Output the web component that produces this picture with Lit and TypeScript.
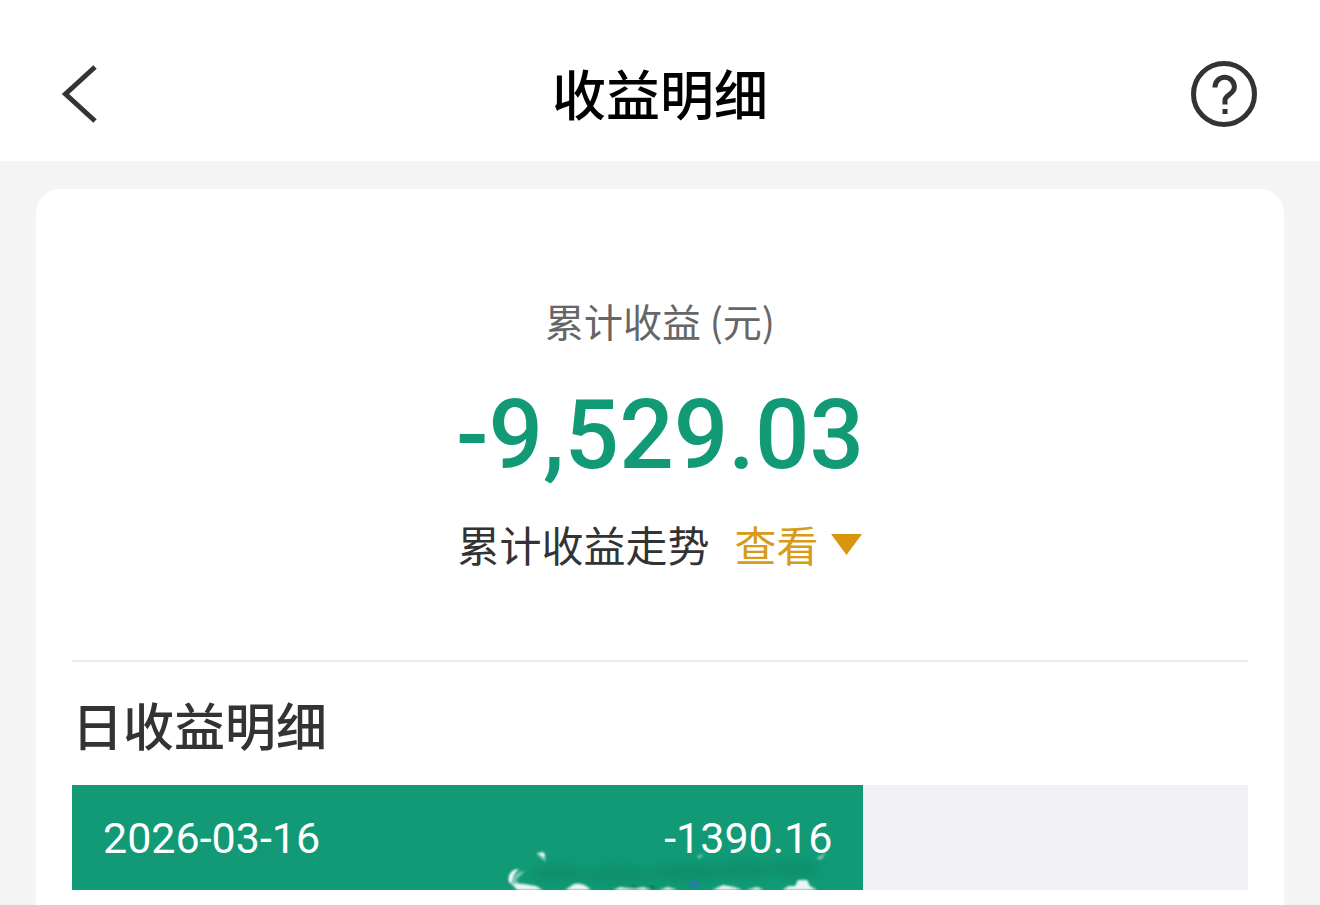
import { LitElement, html, css } from "lit";
import { customElement, property } from "lit/decorators.js";

interface DailyIncome {
  date: string;
  amount: string;
  share: number;
}

@customElement("income-row")
class IncomeRow extends LitElement {
  @property({ attribute: false }) item!: DailyIncome;

  static styles = css`
    :host {
      display: block;
    }
    .track {
      background: #f0f0f5;
    }
    .bar {
      position: relative;
      display: flex;
      justify-content: space-between;
      align-items: center;
      box-sizing: border-box;
      padding: 27px 31px 26px;
      background: #119a75;
      color: #fff;
      font-family: Roboto, sans-serif;
      font-size: 43px;
      line-height: 52px;
      white-space: nowrap;
    }
    .smudge {
      position: absolute;
      right: 28px;
      bottom: -4px;
      width: 328px;
      height: 44px;
    }
  `;

  render() {
    return html`
      <div class="track">
        <div class="bar" style="width:${this.item.share}%">
          <span>${this.item.date}</span>
          <span>${this.item.amount}</span>
          <svg class="smudge" viewBox="0 0 328 44" aria-hidden="true">
            <defs>
              <filter id="soft" x="-10%" y="-50%" width="120%" height="200%">
                <feGaussianBlur stdDeviation="4" />
              </filter>
              <filter id="edge" x="-10%" y="-50%" width="120%" height="200%">
                <feGaussianBlur stdDeviation="1" />
              </filter>
            </defs>
            <g filter="url(#soft)" fill="#0b8766" opacity=".55">
              <ellipse cx="52" cy="24" rx="28" ry="8" />
              <ellipse cx="112" cy="25" rx="34" ry="9" />
              <ellipse cx="180" cy="23" rx="38" ry="10" />
              <ellipse cx="238" cy="20" rx="28" ry="9" />
              <ellipse cx="286" cy="19" rx="25" ry="8" />
            </g>
            <g filter="url(#edge)">
              <path fill="#fff" d="M12 19C5 19 0 25 2 32L5 34Q4 26 12 19ZM29 4Q37 0 38 5L37 8Q34 4 29 4Z" />
              <path fill="#fff" opacity=".45" d="M5 32Q6 22 18 21L9 30L13 34ZM30 5L38 6L39 12L35 9Z" />
              <path fill="#fff" opacity=".9" d="M4 33L17 34L29 36L36 40H10ZM58 40L67 34Q76 32 84 40ZM106 40L113 37L120 38L128 39L136 37L144 40ZM152 40L161 37L171 40ZM205 40L216 35L227 37L236 40ZM239 40L250 37L257 40ZM275 40L282 36L288 36L291 30H300L303 36L310 40Z" />
              <path fill="#fff" opacity=".45" d="M190 6L197 4L192 9ZM309 8L319 3L314 10Z" />
              <path fill="#237fa8" d="M181 37L185 31L190 31L193 37Z" />
              <path fill="#086b50" d="M124 36h7v2h-7zM142 36h6v2h-6z" />
            </g>
          </svg>
        </div>
      </div>
    `;
  }
}

@customElement("app-root")
class AppRoot extends LitElement {
  private days: DailyIncome[] = [
    { date: "2026-03-16", amount: "-1390.16", share: 67.3 },
  ];

  static styles = css`
    :host {
      display: flex;
      flex-direction: column;
      min-height: 100vh;
      background: #f4f4f4;
      color: #333;
      font-family: "Noto Sans CJK SC", sans-serif;
    }
    button {
      padding: 0;
      border: 0;
      background: none;
      color: inherit;
      font: inherit;
      cursor: pointer;
    }
    svg {
      display: block;
    }
    .header {
      display: grid;
      grid-template-columns: 72px 1fr 72px;
      align-items: start;
      padding: 54px 60px 27px;
      background: #fff;
    }
    .header button {
      height: 80px;
    }
    .help {
      justify-self: end;
    }
    h1,
    h2,
    p {
      margin: 0;
      font-weight: 500;
    }
    h1 {
      color: #000;
      font-size: 54px;
      line-height: 78px;
      text-align: center;
    }
    .card {
      flex: 1;
      margin: 28px 36px 0;
      padding: 0 36px 15px;
      border-radius: 24px 24px 0 0;
      background: #fff;
    }
    .summary {
      display: flex;
      flex-direction: column;
      align-items: center;
      padding: 101px 0 85px;
      border-bottom: 2px solid #ebebeb;
    }
    .label {
      color: #666;
      font-size: 39px;
      font-weight: 400;
      line-height: 60px;
    }
    .total {
      margin: 25px 0 18px;
      color: #119a75;
      font-family: Roboto, sans-serif;
      font-size: 96px;
      font-weight: 500;
      line-height: 120px;
    }
    .trend {
      display: flex;
      align-items: center;
      gap: 25px;
      font-size: 42px;
      line-height: 62px;
    }
    .view {
      display: flex;
      align-items: center;
      gap: 12px;
      color: #d89b17;
    }
    h2 {
      padding: 22px 0 21px;
      font-size: 51px;
      line-height: 80px;
    }
  `;

  render() {
    return html`
      <header class="header">
        <button aria-label="返回">
          <svg width="40" height="80" viewBox="0 0 40 80" fill="none" stroke="#333">
            <path d="M35 13L5.500 40L35 67" stroke-width="5" />
          </svg>
        </button>
        <h1>收益明细</h1>
        <button class="help" aria-label="帮助">
          <svg width="72" height="72" viewBox="0 0 72 72" fill="none" stroke="#333" stroke-width="5">
            <circle cx="36" cy="36" r="30.500" />
            <path d="M27 29.500V29A9.700 9.700 0 0 1 46.400 29C46.400 36 37 37 37 42V46.500" />
            <path d="M34.500 51h5v5h-5z" fill="#333" stroke="none" />
          </svg>
        </button>
      </header>
      <main class="card">
        <section class="summary">
          <p class="label">累计收益 (元)</p>
          <div class="total">-9,529.03</div>
          <div class="trend">
            <span>累计收益走势</span>
            <button class="view">
              查看
              <svg width="32" height="22" viewBox="0 0 32 22" aria-hidden="true">
                <path d="M0 1H31L15.500 22Z" fill="#d8960f" />
              </svg>
            </button>
          </div>
        </section>
        <section>
          <h2>日收益明细</h2>
          ${this.days.map((d) => html`<income-row .item=${d}></income-row>`)}
        </section>
      </main>
    `;
  }
}
